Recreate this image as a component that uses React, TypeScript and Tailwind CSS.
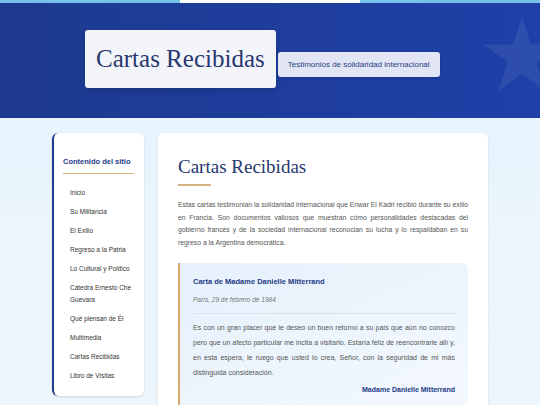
const menu = [
  "Inicio",
  "Su Militancia",
  "El Exilio",
  "Regreso a la Patria",
  "Lo Cultural y Político",
  "Cátedra Ernesto Che Guevara",
  "Qué piensan de Él",
  "Multimedia",
  "Cartas Recibidas",
  "Libro de Visitas",
];

const sans = "font-['Liberation_Sans',Arial,sans-serif]";
const serif = "font-['Liberation_Serif',Georgia,serif]";

export default function App() {
  return (
    <div className={`min-h-[405px] w-[540px] overflow-hidden bg-gradient-to-b from-[#e6f4fe] to-[#eef6fc] ${sans}`}>
      {/* Flag strip */}
      <div className="flex h-[3px]">
        <div className="flex-1 bg-[#75c1ea]" />
        <div className="flex-1 bg-white" />
        <div className="flex-1 bg-[#75c1ea]" />
      </div>

      {/* Header */}
      <header className="relative h-[115px] overflow-hidden bg-gradient-to-r from-[#1e3a8f] to-[#1e40a8]">
        <svg viewBox="0 0 100 100" className="absolute left-[482px] top-[12px] h-[80px] w-[80px] text-white opacity-[0.07]">
          <polygon fill="currentColor" points="50,2 61,37 98,37 68,59 79,95 50,73 21,95 32,59 2,37 39,37" />
        </svg>
        <div className="relative flex items-start pl-[85px] pt-[27px]">
          <div className="rounded-[3px] bg-[#f3f5fb] px-[11px] py-[12px] shadow-md">
            <h1 className={`${serif} text-[25px] leading-[34px] text-[#26386e]`}>Cartas Recibidas</h1>
          </div>
          <div className="ml-[2px] mt-[22px] rounded-[3px] bg-[#e1e5f4] px-[10px] py-[8px] text-[8px] leading-[9px] text-[#2a3f80] shadow">
            Testimonios de solidaridad internacional
          </div>
        </div>
      </header>

      {/* Main */}
      <main className="mx-auto flex w-[436px] items-start gap-[14px] pt-[15px]">
        <aside className="w-[92px] rounded-md border-l-2 border-[#1e3a8a] bg-white pl-[9px] pr-[10px] pb-[11px] pt-[24px] shadow">
          <h3 className="text-[7.5px] font-bold leading-[9px] text-[#233a86]">Contenido del sitio</h3>
          <div className="mt-[7px] h-px bg-[#d8b07c]" />
          <ul className="mt-[9px]">
            {menu.map((item) => (
              <li key={item} className="py-[3.5px] pl-[7px] text-[6.5px] leading-[12px] text-[#333]">
                {item}
              </li>
            ))}
          </ul>
        </aside>

        <section className="min-h-[300px] flex-1 rounded-md bg-white px-[20px] pt-[22px] shadow">
          <h2 className={`${serif} text-[19px] leading-[24px] text-[#26386e]`}>Cartas Recibidas</h2>
          <div className="mt-[5px] h-[2px] w-[33px] bg-[#d8b383]" />
          <p className="mt-[13px] text-justify text-[6.8px] leading-[12.5px] text-[#555]">
            Estas cartas testimonian la solidaridad internacional que Enwar El Kadri recibió durante su exilio en
            Francia. Son documentos valiosos que muestran cómo personalidades destacadas del gobierno francés y de la
            sociedad internacional reconocian su lucha y lo respaldaban en su regreso a la Argentina democrática.
          </p>

          <div className="mt-[14px] rounded-r-md border-l-2 border-[#d8a66e] bg-gradient-to-br from-[#e6f1fc] to-[#f3f8fd] pl-[13px] pr-[13px] pb-[12px] pt-[14px]">
            <h4 className="text-[7.5px] font-bold leading-[9px] text-[#233a86]">Carta de Madame Danielle Mitterrand</h4>
            <p className="mt-[9px] text-[6.5px] italic leading-[9px] text-[#777]">París, 29 de febrero de 1984</p>
            <div className="mt-[8.5px] h-px bg-[#d9e2ec]" />
            <p className="mt-[6.5px] text-justify text-[7px] leading-[15px] text-[#555]">
              Es con un gran placer que le deseo un buen retorno a su país que aún no conozco pero que un afecto
              particular me incita a visitarlo. Estaría feliz de reencontrarle allí y, en esta espera, le ruego que
              usted lo crea, Señor, con la seguridad de mi más distinguida consideración.
            </p>
            <p className="mt-[5px] text-right text-[7px] font-bold leading-[9px] text-[#233a86]">
              Madame Danielle Mitterrand
            </p>
          </div>
        </section>
      </main>
    </div>
  );
}
